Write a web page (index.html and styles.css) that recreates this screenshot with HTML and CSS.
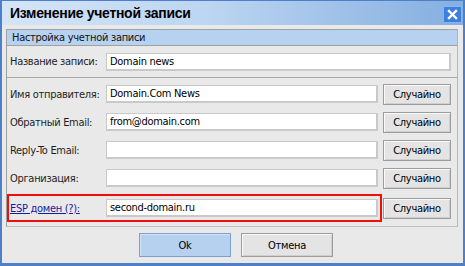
FILE: index.html
```html
<!DOCTYPE html>
<html lang="ru">
  <head>
    <meta charset="utf-8">
    <title>Изменение учетной записи</title>
    <link rel="stylesheet" href="styles.css">
  </head>
  <body>
    <div class="window">
      <div class="titlebar">
        <span class="title">Изменение учетной записи</span>
        <button class="close" type="button" aria-label="Закрыть">
          <svg width="11" height="11" viewBox="0 0 11 11">
            <path d="M2 2 L9 9 M9 2 L2 9" stroke="#fff" stroke-width="2.4" stroke-linecap="square" />
          </svg>
        </button>
      </div>

      <div class="content">
        <div class="panel">
          <div class="panel-head">Настройка учетной записи</div>

          <div class="row row-first">
            <label class="label" for="acc-name">Название записи:</label>
            <input class="field field-wide" id="acc-name" type="text" value="Domain news">
          </div>

          <div class="rows">
            <div class="row">
              <label class="label" for="from-name">Имя отправителя:</label>
              <input class="field" id="from-name" type="text" value="Domain.Com News">
              <button class="btn" type="button">Случайно</button>
            </div>
            <div class="row">
              <label class="label" for="from-email">Обратный Email:</label>
              <input class="field" id="from-email" type="text" value="from@domain.com">
              <button class="btn" type="button">Случайно</button>
            </div>
            <div class="row">
              <label class="label" for="reply-to">Reply-To Email:</label>
              <input class="field" id="reply-to" type="text" value="">
              <button class="btn" type="button">Случайно</button>
            </div>
            <div class="row">
              <label class="label" for="org">Организация:</label>
              <input class="field" id="org" type="text" value="">
              <button class="btn" type="button">Случайно</button>
            </div>
            <div class="row row-esp">
              <div class="highlight">
                <a class="label link" href="#">ESP домен (?):</a>
                <input class="field" id="esp" type="text" value="second-domain.ru">
              </div>
              <button class="btn" type="button">Случайно</button>
            </div>
          </div>
        </div>

        <div class="actions">
          <button class="btn btn-action btn-primary" type="button">Ok</button>
          <button class="btn btn-action" type="button">Отмена</button>
        </div>
      </div>
    </div>
  </body>
</html>
```

FILE: styles.css
```css
body {
  margin: 0;
  font-family: "DejaVu Sans Condensed", "Liberation Sans", Arial, sans-serif;
  font-size: 11px;
  letter-spacing: -0.3px;
  color: #1e1e1e;
}

.window {
  display: flex;
  flex-direction: column;
  width: 465px;
  height: 266px;
  box-sizing: border-box;
  border: 2px solid #4d80c9;
  border-top: 1px solid #4d80c9;
  border-bottom-width: 3px;
  background-color: #e9e9e9;
}

.titlebar {
  display: flex;
  align-items: center;
  justify-content: space-between;
  height: 24px;
  padding: 0 1px 0 8px;
  background: linear-gradient(to right, #d5e5f8, #bcd5f1 45%, #84afe1);
}

.title {
  font-family: "Liberation Sans", Arial, sans-serif;
  font-size: 14px;
  font-weight: bold;
  letter-spacing: -0.3px;
  color: #000;
}

.close {
  display: flex;
  align-items: center;
  justify-content: center;
  width: 19px;
  height: 17px;
  padding: 0;
  margin-top: 2px;
  border: 1px solid #8ab4ee;
  background-color: #3f7fe0;
}

.content {
  display: flex;
  flex-direction: column;
  flex: 1;
  padding: 4px 5px 0 4px;
}

.panel {
  border: 1px solid #a0a0a0;
  border-right-color: #b5b5b5;
  border-bottom-color: #c0c0c0;
}

.panel-head {
  height: 15px;
  line-height: 15px;
  padding-left: 5px;
  background-color: #b7d2f0;
  border-bottom: 1px solid #a0a0a0;
  color: #111;
}

.rows {
  display: flex;
  flex-direction: column;
  padding: 2px 0 4px;
}

.row {
  display: flex;
  align-items: center;
  height: 28px;
  padding: 0 6px 0 3px;
}

.row-first {
  height: 31px;
  border-bottom: 1px solid #a9a9a9;
}

.label {
  width: 96px;
  flex: none;
  white-space: nowrap;
}

.field {
  width: 272px;
  height: 18px;
  box-sizing: border-box;
  padding: 0 3px;
  border: 2px solid #c9c9c9;
  border-width: 1px 2px 2px 1px;
  background-color: #fff;
  font-family: inherit;
  font-size: 11px;
  letter-spacing: inherit;
  color: #000;
  outline: none;
}

.field-wide {
  width: 346px;
}

.btn {
  width: 68px;
  height: 21px;
  margin-left: auto;
  padding: 0;
  box-sizing: border-box;
  border: 1px solid #9c9c9c;
  box-shadow: inset 1px 1px 0 #fafafa, inset -1px -1px 0 #cfcfcf;
  background-color: #e4e4e4;
  font-family: inherit;
  font-size: 11px;
  letter-spacing: inherit;
  color: #000;
}

.row-esp {
  margin-top: 2px;
  padding-left: 0;
}

.highlight {
  display: flex;
  align-items: center;
  width: 375px;
  height: 28px;
  box-sizing: border-box;
  padding-left: 1px;
  border: 2px solid #f20d0d;
}

.link {
  color: #1a1aa0;
  text-decoration: underline;
}

.actions {
  display: flex;
  justify-content: center;
  gap: 10px;
  padding: 6px 0 0 8px;
}

.btn-action {
  width: 92px;
  height: 24px;
  margin-left: 0;
}

.btn-primary {
  border-color: #7d9fcf;
  box-shadow: inset 1px 1px 0 #d4e4f7;
  background-color: #b6d0ef;
}
```
